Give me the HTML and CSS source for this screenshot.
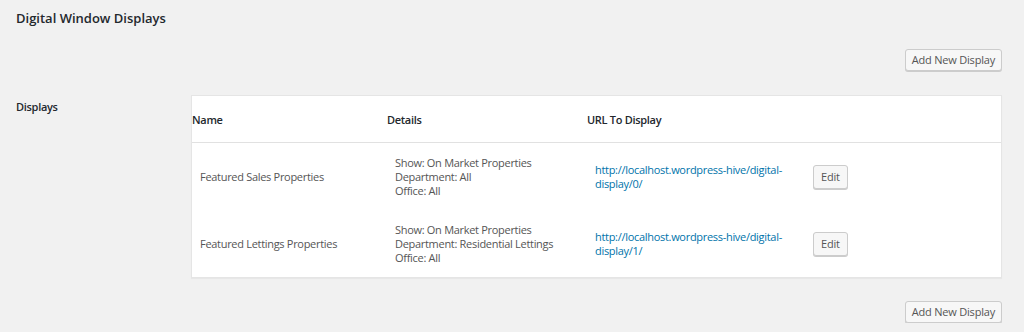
FILE: index.html
```html
<!DOCTYPE html>
<html>
<head>
<meta charset="utf-8">
<link rel="stylesheet" href="styles.css">
</head>
<body>
<div class="wrap">
  <h1 class="title">Digital Window Displays</h1>
  <div class="actions"><button class="btn">Add New Display</button></div>
  <div class="row">
    <div class="label">Displays</div>
    <div class="card">
      <table class="displays">
        <colgroup>
          <col class="c-name"><col class="c-details"><col class="c-url"><col class="c-edit">
        </colgroup>
        <thead>
          <tr><th>Name</th><th>Details</th><th>URL To Display</th><th></th></tr>
        </thead>
        <tbody>
          <tr>
            <td>Featured Sales Properties</td>
            <td>Show: On Market Properties<br>Department: All<br>Office: All</td>
            <td><a href="#">http://localhost.wordpress-hive/digital-display/0/</a></td>
            <td><button class="btn btn-edit">Edit</button></td>
          </tr>
          <tr>
            <td>Featured Lettings Properties</td>
            <td>Show: On Market Properties<br>Department: Residential Lettings<br>Office: All</td>
            <td><a href="#">http://localhost.wordpress-hive/digital-display/1/</a></td>
            <td><button class="btn btn-edit">Edit</button></td>
          </tr>
        </tbody>
      </table>
    </div>
  </div>
  <div class="actions actions-bottom"><button class="btn">Add New Display</button></div>
</div>
</body>
</html>
```
FILE: styles.css
```css
html, body {
  margin: 0;
  padding: 0;
  background: #f1f1f1;
}
body {
  font-family: "Open Sans", "Noto Sans", sans-serif;
  font-size: 11px;
  letter-spacing: -0.3px;
  color: #555;
}
.wrap {
  padding: 0 22px 0 16px;
  display: flex;
  flex-direction: column;
}
.title {
  margin: 8px 0 0 0;
  font-size: 13px;
  font-weight: 600;
  letter-spacing: 0;
  line-height: 20px;
  color: #23282d;
}
.actions {
  display: flex;
  justify-content: flex-end;
  margin-top: 21px;
}
.actions-bottom {
  margin-top: 23px;
}
.btn {
  font-family: inherit;
  font-size: 11px;
  letter-spacing: -0.2px;
  color: #555;
  background: #f7f7f7;
  border: 1px solid #ccc;
  border-radius: 3px;
  box-shadow: 0 1px 0 #ccc;
  height: 22px;
  padding: 0 6px;
  line-height: 20px;
  cursor: pointer;
}
.row {
  display: flex;
  margin-top: 24px;
}
.label {
  width: 175px;
  flex: none;
  font-weight: 600;
  color: #23282d;
  padding-top: 4px;
}
.card {
  flex: 1;
  background: #fff;
  border: 1px solid #e5e5e5;
  box-shadow: 0 1px 1px rgba(0,0,0,0.04);
}
.displays {
  width: 100%;
  border-collapse: collapse;
  table-layout: fixed;
}
.c-name { width: 195px; }
.c-details { width: 200px; }
.c-url { width: 218px; }
.displays th {
  text-align: left;
  font-weight: 600;
  color: #23282d;
  height: 46px;
  padding: 0;
  border-bottom: 1px solid #e1e1e1;
  vertical-align: middle;
}
.displays td {
  padding: 8px;
  height: 51px;
  line-height: 14px;
  vertical-align: middle;
}
.displays a {
  color: #0073aa;
  text-decoration: none;
}
.btn-edit {
  height: 24px;
  padding: 0 7px;
}
```
